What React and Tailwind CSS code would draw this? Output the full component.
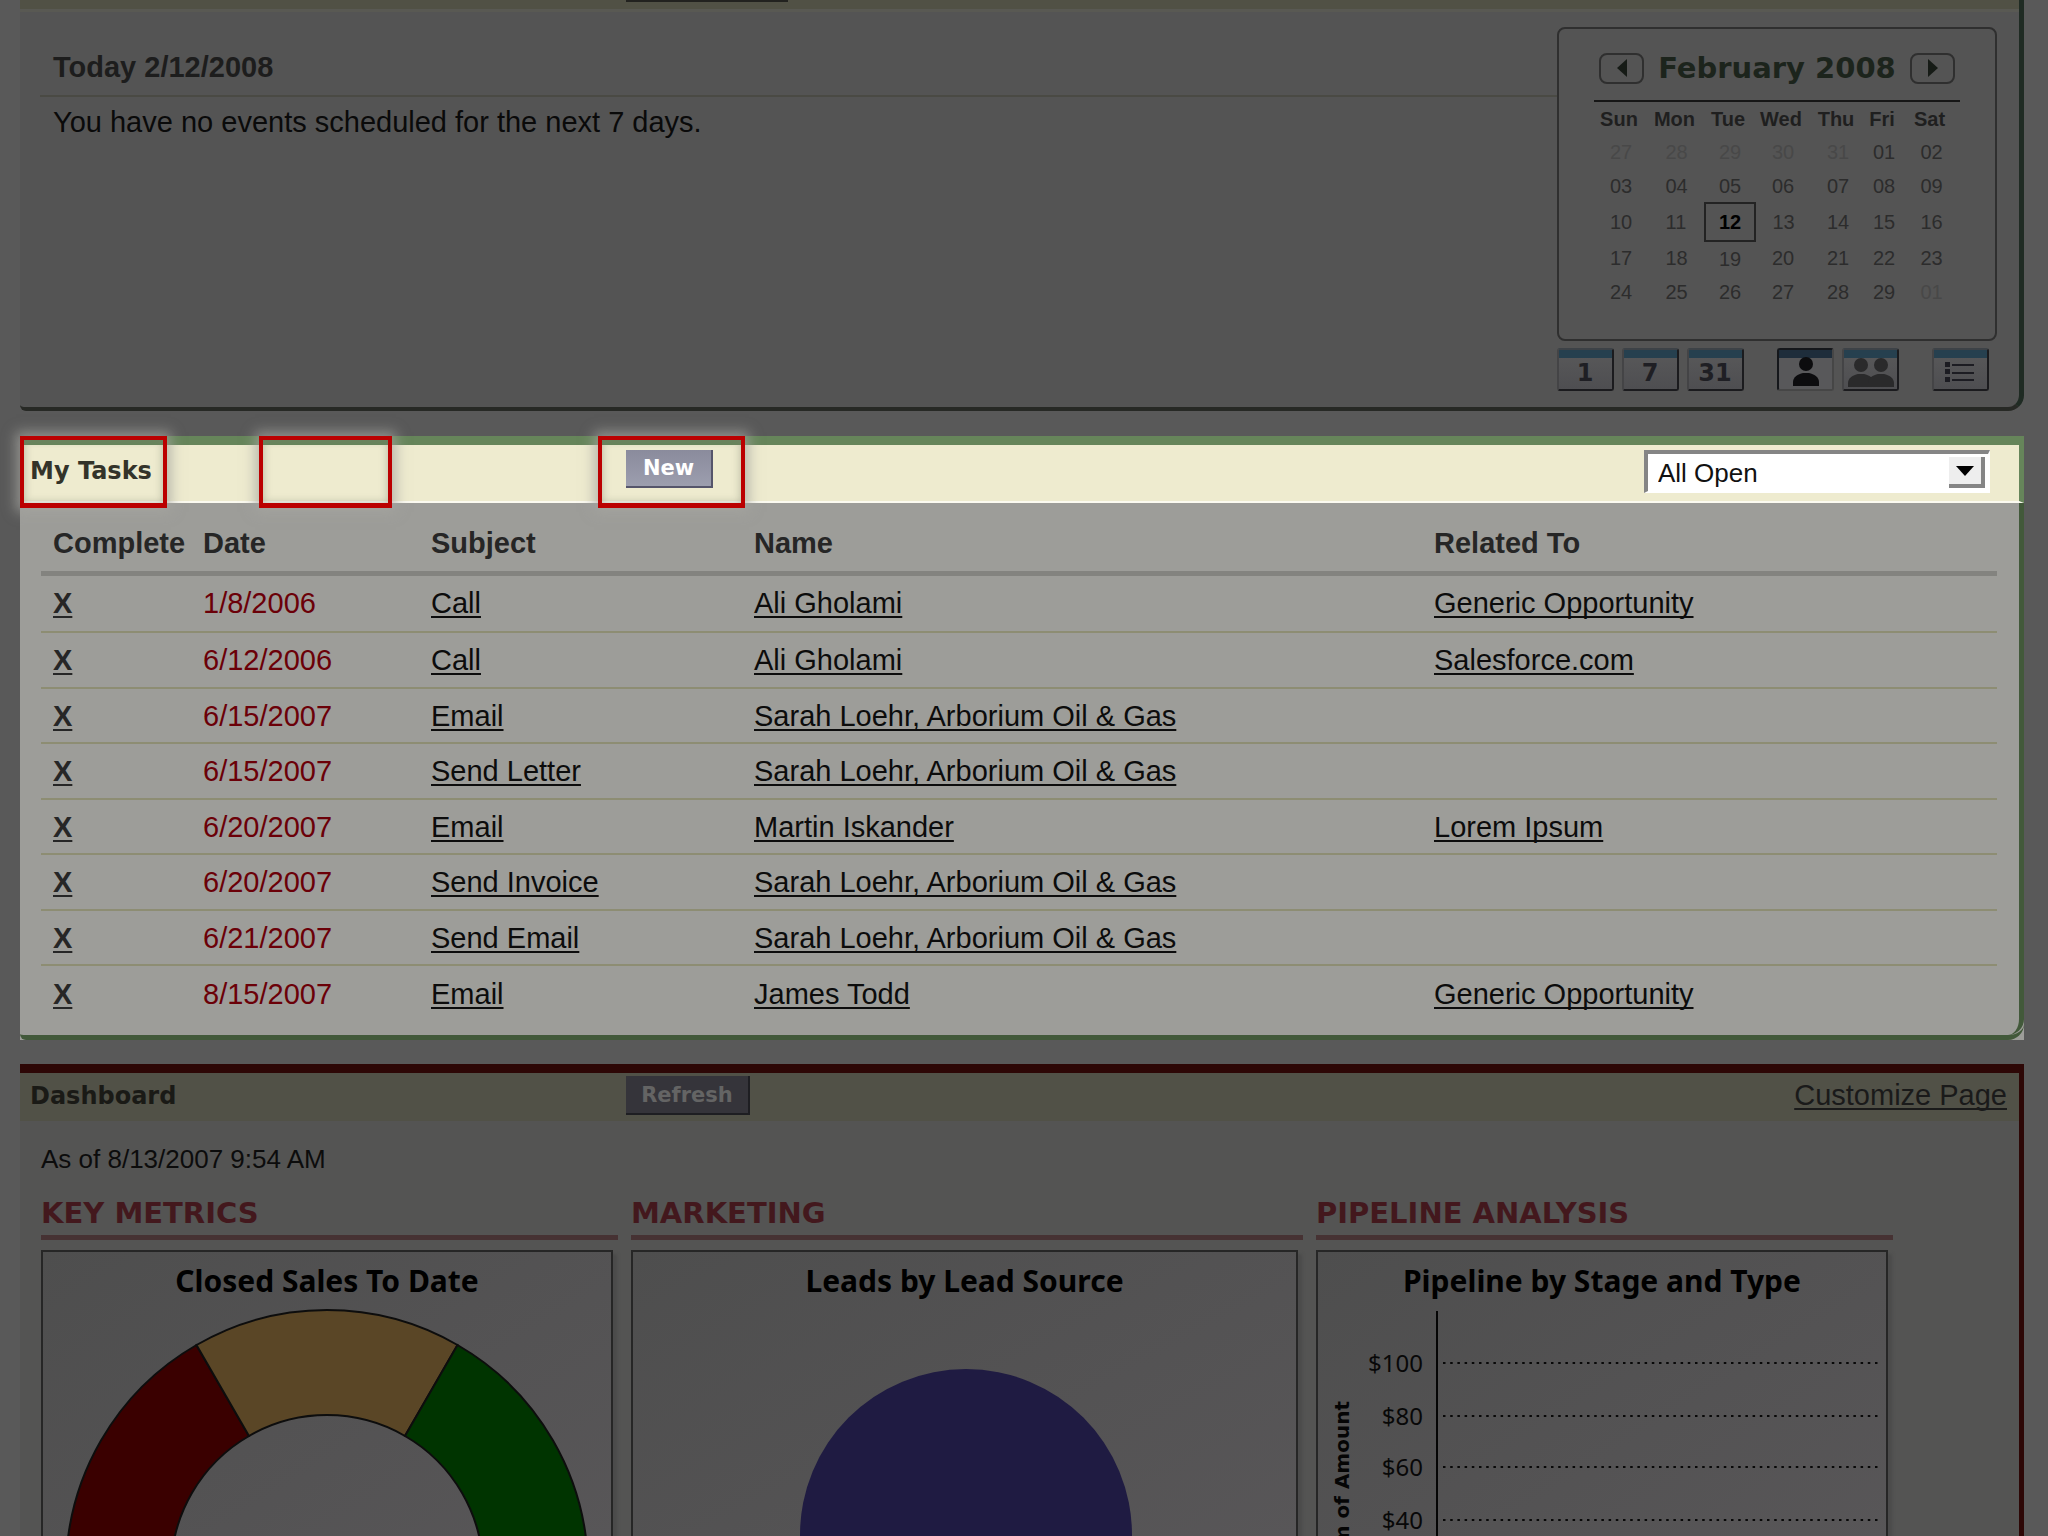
import React from "react";

const tasks = [
  { date: "1/8/2006", subject: "Call", name: "Ali Gholami", related: "Generic Opportunity" },
  { date: "6/12/2006", subject: "Call", name: "Ali Gholami", related: "Salesforce.com" },
  { date: "6/15/2007", subject: "Email", name: "Sarah Loehr, Arborium Oil & Gas", related: "" },
  { date: "6/15/2007", subject: "Send Letter", name: "Sarah Loehr, Arborium Oil & Gas", related: "" },
  { date: "6/20/2007", subject: "Email", name: "Martin Iskander", related: "Lorem Ipsum" },
  { date: "6/20/2007", subject: "Send Invoice", name: "Sarah Loehr, Arborium Oil & Gas", related: "" },
  { date: "6/21/2007", subject: "Send Email", name: "Sarah Loehr, Arborium Oil & Gas", related: "" },
  { date: "8/15/2007", subject: "Email", name: "James Todd", related: "Generic Opportunity" },
];

const weekDays = ["Sun", "Mon", "Tue", "Wed", "Thu", "Fri", "Sat"];

const weeks = [
  ["27", "28", "29", "30", "31", "01", "02"],
  ["03", "04", "05", "06", "07", "08", "09"],
  ["10", "11", "12", "13", "14", "15", "16"],
  ["17", "18", "19", "20", "21", "22", "23"],
  ["24", "25", "26", "27", "28", "29", "01"],
];

const isOtherMonth = (week, day) =>
  (week === 0 && Number(day) > 20) || (week === 4 && day === "01");

const gridLines = [
  { label: "$100", y: 52 },
  { label: "$80", y: 105 },
  { label: "$60", y: 156 },
  { label: "$40", y: 209 },
];

const rowHeight = (i) => {
  if (i === 0) return "h-[59px]";
  return i % 2 ? "h-[56px]" : "h-[55px]";
};

const TaskLink = ({ children, bold }) => (
  <a
    href="#"
    className={
      bold
        ? "font-bold text-[#262626] underline decoration-2 underline-offset-3"
        : "text-[#0c0c0c] underline decoration-2 underline-offset-3 [text-decoration-skip-ink:none]"
    }
  >
    {children}
  </a>
);

const ViewButton = ({ label, active, children }) => (
  <button
    aria-label={label}
    className={
      active
        ? "h-[43px] w-[57px] rounded-[3px] border-2 border-t-[#15171b] border-l-[#15171b] border-r-[#464646] border-b-[#464646] bg-[#58585a]"
        : "h-[43px] w-[57px] rounded-[3px] border-2 border-t-[#3d4247] border-l-[#444446] border-r-[#1b1b1e] border-b-[#1b1b1e] bg-linear-to-b from-[#59595a] to-[#4e4e51]"
    }
  >
    <svg viewBox="0 0 53 39" className="block h-[39px] w-[53px]">
      <rect width="53" height="8" fill={active ? "#1e2d3b" : "#26404f"} />
      {children}
    </svg>
  </button>
);

const Person = ({ x, y, color }) => (
  <g transform={`translate(${x} ${y})`} fill={color}>
    <circle cx="13" cy="6" r="7" />
    <path d="M0 28v-4c0-5 5-8 10-9h6c5 1 10 4 10 9v4z" />
  </g>
);

const DayIcon = ({ label, children }) => (
  <ViewButton label={label}>
    <text
      x="26"
      y="31"
      textAnchor="middle"
      fill="#1f1f24"
      className="font-['DejaVu_Sans'] text-[24px] font-bold"
    >
      {children}
    </text>
  </ViewButton>
);

const Calendar = () => (
  <div className="w-[440px]">
    <div className="h-[314px] rounded-lg border-2 border-[#2f2f2f] px-[35px] pt-[23px]">
      <div className="flex h-[32px] items-center justify-between px-[5px]">
        <button
          aria-label="Previous month"
          className="flex h-[31px] w-[45px] items-center justify-center rounded-lg border-2 border-[#2f2f2f]"
        >
          <svg viewBox="0 0 10 18" className="h-[18px] w-[10px]">
            <path d="M10 0v18L0 9z" fill="#161b16" />
          </svg>
        </button>
        <h2 className="font-['DejaVu_Sans'] text-[29px] font-bold leading-8 text-[#1c241c]">
          February 2008
        </h2>
        <button
          aria-label="Next month"
          className="flex h-[31px] w-[45px] items-center justify-center rounded-lg border-2 border-[#2f2f2f]"
        >
          <svg viewBox="0 0 10 18" className="h-[18px] w-[10px]">
            <path d="M0 0v18l10-9z" fill="#161b16" />
          </svg>
        </button>
      </div>
      <table className="mt-4 w-full table-fixed border-t-2 border-[#161616] text-center text-[20px] leading-6">
        <colgroup>
          <col className="w-[54px]" />
          <col className="w-[57px]" />
          <col className="w-[50px]" />
          <col className="w-[56px]" />
          <col className="w-[54px]" />
          <col className="w-[38px]" />
          <col />
        </colgroup>
        <thead>
          <tr className="h-[34px] text-[#1f1f1f]">
            {weekDays.map((day) => (
              <th key={day} className="p-0 pr-1 font-bold">
                {day}
              </th>
            ))}
          </tr>
        </thead>
        <tbody>
          {weeks.map((week, i) => (
            <tr key={i} className={i === 2 ? "h-[38px]" : "h-[34px]"}>
              {week.map((day) => {
                if (i === 2 && day === "12") {
                  return (
                    <td key={day} className="border-2 border-[#232323] p-0 font-bold text-black">
                      {day}
                    </td>
                  );
                }
                return (
                  <td
                    key={day}
                    className={isOtherMonth(i, day) ? "p-0 text-[#484848]" : "p-0 text-[#2c2c2c]"}
                  >
                    {day}
                  </td>
                );
              })}
            </tr>
          ))}
        </tbody>
      </table>
    </div>

    {/* View switcher */}
    <div className="mt-[7px] flex gap-2">
      <DayIcon label="Day view">1</DayIcon>
      <DayIcon label="Week view">7</DayIcon>
      <DayIcon label="Month view">31</DayIcon>
      <div className="ml-[25px] flex gap-2">
        <ViewButton label="Single user view" active>
          <Person x={14} y={8} color="#0c0c0e" />
        </ViewButton>
        <ViewButton label="Multi user view">
          <Person x={4} y={9} color="#2a2a2b" />
          <Person x={24} y={9} color="#2a2a2b" />
        </ViewButton>
      </div>
      <div className="ml-[25px]">
        <ViewButton label="List view">
          <g fill="#1c1c22">
            <rect x="11" y="12" width="5" height="5" />
            <rect x="11" y="19" width="5" height="5" />
            <rect x="11" y="27" width="5" height="5" />
            <rect x="18" y="14" width="22" height="2" />
            <rect x="18" y="22" width="22" height="2" />
            <rect x="18" y="29" width="22" height="2" />
          </g>
        </ViewButton>
      </div>
    </div>
  </div>
);

const Events = () => (
  <section className="rounded-bl-md rounded-br-2xl border-r-5 border-b-4 border-r-[#1f2b23] border-b-[#272925] bg-[#545454]">
    <div className="h-[9px] bg-[#515145] pl-[606px]">
      <div className="h-[2px] w-[162px] bg-[#22221f]" />
    </div>
    <div className="h-[3px] bg-[#595953]" />
    <div className="flex h-[395px] pt-[15px] pr-[22px] pl-5">
      <div className="flex-1">
        <h2 className="border-b-2 border-[#4a4a44] pt-[22px] pb-[9px] pl-[13px] text-[29px] font-bold leading-[37px] text-[#1d1d1d]">
          Today 2/12/2008
        </h2>
        <p className="pt-[7px] pl-[13px] text-[29px] leading-[37px] text-[#0a0a0a]">
          You have no events scheduled for the next 7 days.
        </p>
      </div>
      <Calendar />
    </div>
  </section>
);

const Marker = ({ className }) => (
  <div
    className={`pointer-events-none absolute -top-[9px] h-[72px] border-4 border-b-5 border-[#bb0000] shadow-[0_0_12px_4px_rgba(165,165,160,0.75),inset_0_0_8px_rgba(120,125,105,0.5)] ${className}`}
  />
);

const Tasks = () => (
  <section className="mt-[25px] bg-[#9d9d99]">
    <div className="rounded-bl-md rounded-br-2xl border-b-5 border-[#42593a]">
      <div className="relative flex h-[67px] items-start border-t-9 border-r-5 border-t-[#66855a] border-r-[#66855a] border-b-2 border-b-[#fbfaf0] bg-[#eeebcf]">
        <h2 className="w-[606px] pt-3 pl-[10px] font-['DejaVu_Sans'] text-[24px] font-bold leading-7 text-[#333329]">
          My Tasks
        </h2>
        <button className="mt-[5px] h-[38px] w-[87px] border-r-2 border-b-2 border-[#55556b] bg-linear-to-b from-[#8a8b9c] to-[#9c9eae] font-['DejaVu_Sans'] text-[21px] font-bold leading-8 text-white">
          New
        </button>
        <div className="relative mt-[5px] mr-[29px] ml-auto">
          <select
            aria-label="Task filter"
            className="block h-[43px] w-[346px] appearance-none border-t-4 border-l-4 border-r-2 border-b-2 border-t-[#858585] border-l-[#858585] border-r-white border-b-white bg-white pl-[10px] text-[26px] leading-9 text-[#111]"
          >
            <option>All Open</option>
          </select>
          <span className="pointer-events-none absolute top-[7px] right-[5px] flex h-[31px] w-[36px] items-center justify-center border-r-4 border-b-4 border-[#858585] bg-[#eeeeee]">
            <svg viewBox="0 0 18 10" className="h-[10px] w-[18px]">
              <path d="M0 0h18l-9 10z" fill="#000" />
            </svg>
          </span>
        </div>
        <Marker className="left-0 w-[147px]" />
        <Marker className="left-[239px] w-[133px]" />
        <Marker className="left-[578px] w-[147px]" />
      </div>

      <div className="rounded-br-2xl border-r-5 border-[#42593a] pt-[12px] pr-[22px] pb-[14px] pl-[21px]">
        <table className="w-full table-fixed text-left text-[29px] leading-[36px]">
          <colgroup>
            <col className="w-[150px]" />
            <col className="w-[228px]" />
            <col className="w-[323px]" />
            <col className="w-[680px]" />
            <col />
          </colgroup>
          <thead>
            <tr className="h-[58px] border-b-5 border-[#83837f] text-[#262626]">
              <th className="pl-3 font-bold">Complete</th>
              <th className="pl-3 font-bold">Date</th>
              <th className="pl-3 font-bold">Subject</th>
              <th className="pl-3 font-bold">Name</th>
              <th className="pl-3 font-bold">Related To</th>
            </tr>
          </thead>
          <tbody>
            {tasks.map((task, i) => (
              <tr key={i} className={`border-b-2 border-[#8d8d73] last:border-b-0 ${rowHeight(i)}`}>
                <td className="pl-3">
                  <TaskLink bold>X</TaskLink>
                </td>
                <td className="pl-3 text-[#6b0008]">{task.date}</td>
                <td className="pl-3">
                  <TaskLink>{task.subject}</TaskLink>
                </td>
                <td className="pl-3">
                  <TaskLink>{task.name}</TaskLink>
                </td>
                <td className="pl-3">{task.related && <TaskLink>{task.related}</TaskLink>}</td>
              </tr>
            ))}
          </tbody>
        </table>
      </div>
    </div>
  </section>
);

const DashboardColumn = ({ heading, title, children }) => (
  <div>
    <h2 className="border-b-5 border-[#463233] pb-1 font-['DejaVu_Sans'] text-[29px] font-bold leading-9 text-[#43181d]">
      {heading}
    </h2>
    <div className="mt-[10px] mr-[5px] h-[360px] overflow-hidden border-2 border-[#262626] bg-linear-to-br from-[#4e4e4e] to-[#595759] pt-2 shadow-[4px_4px_3px_#4b4b4b]">
      <h3 className="text-center font-['Noto_Sans'] text-[30px] font-bold leading-[41px] text-black">
        {title}
      </h3>
      {children}
    </div>
  </div>
);

const Gauge = () => (
  <svg viewBox="-266 -262 532 300" className="mx-auto mt-2 block h-[300px] w-[532px]" stroke="#0d0d0d" strokeWidth="2">
    <path d="M-261 0A261 261 0 0 1-130.5-226L-78-135A156 156 0 0 0-156 0z" fill="#3a0000" />
    <path d="M-130.5-226A261 261 0 0 1 130.5-226L78-135A156 156 0 0 0-78-135z" fill="#5a4626" />
    <path d="M130.5-226A261 261 0 0 1 261 0H156A156 156 0 0 0 78-135z" fill="#003400" />
  </svg>
);

const Pie = () => (
  <svg viewBox="0 0 334 334" className="mx-auto mt-[68px] block h-[334px] w-[334px]">
    <circle cx="168" cy="166" r="166" fill="#1f1b42" />
  </svg>
);

const PipelineChart = () => (
  <svg viewBox="0 0 568 300" className="mt-[10px] block h-[300px] w-full" preserveAspectRatio="xMinYMin meet">
    <line x1="119" y1="0" x2="119" y2="300" stroke="#050505" strokeWidth="2" />
    {gridLines.map((line) => (
      <g key={line.label}>
        <text
          x="105"
          y={line.y + 9}
          textAnchor="end"
          fill="#080808"
          className="font-['Noto_Sans'] text-[24px]"
        >
          {line.label}
        </text>
        <line x1="125" y1={line.y} x2="560" y2={line.y} stroke="#080808" strokeWidth="2" strokeDasharray="2.5 4.7" />
      </g>
    ))}
    <text
      transform="translate(31 90) rotate(-90)"
      textAnchor="end"
      fill="#050505"
      className="font-['DejaVu_Sans'] text-[20px] font-bold"
    >
      Sum of Amount
    </text>
  </svg>
);

const Dashboard = () => (
  <section className="mt-[24px] h-[600px] border-t-9 border-r-5 border-[#2d0706] bg-[#545453]">
    <div className="flex h-[48px] items-start bg-[#515147]">
      <h2 className="w-[606px] pt-[9px] pl-[10px] font-['DejaVu_Sans'] text-[24px] font-bold leading-7 text-[#1a1a16]">
        Dashboard
      </h2>
      <button className="mt-[3px] h-[39px] w-[124px] border-r-2 border-b-2 border-[#1e1e22] bg-[#35343a] font-['DejaVu_Sans'] text-[21px] font-bold leading-8 text-[#646464]">
        Refresh
      </button>
      <a
        href="#"
        className="mt-1 mr-3 ml-auto text-[29px] leading-9 text-[#1a1a1a] underline decoration-2 underline-offset-3 [text-decoration-skip-ink:none]"
      >
        Customize Page
      </a>
    </div>
    <p className="pt-[22px] pl-[21px] text-[26px] leading-8 text-[#0c0c0c]">As of 8/13/2007 9:54 AM</p>
    <div className="grid grid-cols-[577fr_672fr_577fr] gap-[13px] pt-[20px] pr-[126px] pl-[21px]">
      <DashboardColumn heading="KEY METRICS" title="Closed Sales To Date">
        <Gauge />
      </DashboardColumn>
      <DashboardColumn heading="MARKETING" title="Leads by Lead Source">
        <Pie />
      </DashboardColumn>
      <DashboardColumn heading="PIPELINE ANALYSIS" title="Pipeline by Stage and Type">
        <PipelineChart />
      </DashboardColumn>
    </div>
  </section>
);

const App = () => (
  <main className="h-screen overflow-hidden bg-[#595959] pr-6 pl-5 font-['Liberation_Sans',sans-serif]">
    <Events />
    <Tasks />
    <Dashboard />
  </main>
);

export default App;
